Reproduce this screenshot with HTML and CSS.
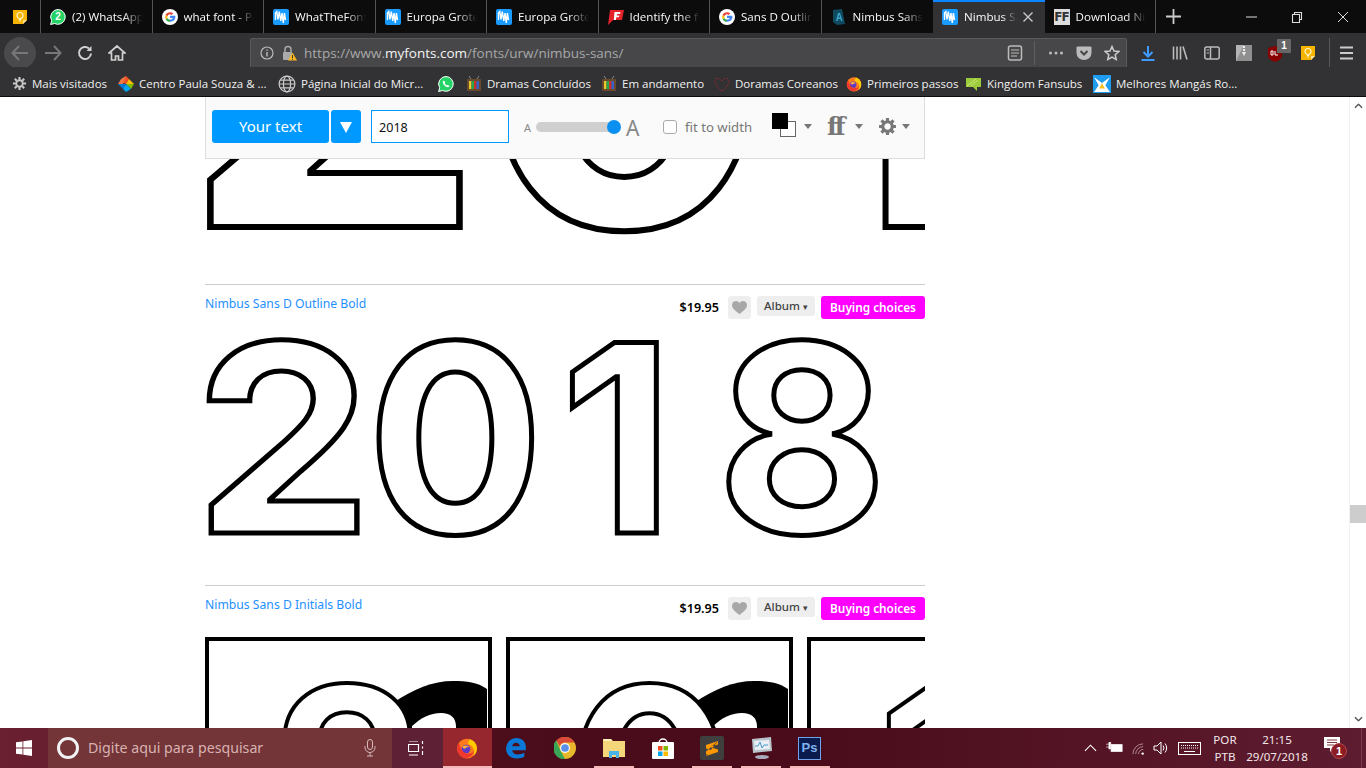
FILE: index.html
```html
<!DOCTYPE html>
<html lang="pt">
<head>
<meta charset="utf-8">
<title>Nimbus Sans</title>
<link rel="stylesheet" href="styles.css">
</head>
<body>
<svg class="defs" width="0" height="0">
  <symbol id="mf" viewBox="0 0 16 16"><rect width="16" height="16" rx="2" fill="#1a9bff"/><path d="M2.500 11V4l1.300-1.500 1.200 8 1.300-8 1.500 9.500 1.200-8 1.300 10 1.100-10 1.100 7" fill="none" stroke="#fff" stroke-width="1.400"/></symbol>
  <symbol id="goog" viewBox="0 0 16 16"><circle cx="8" cy="8" r="8" fill="#fff"/><path d="M8 6.800h5.300c.3 2-.3 6-5.300 6V10.600c1.500 0 2.400-.7 2.700-1.700H8z" fill="#4285f4"/><path d="M8 10.600v2.200c-2 0-3.600-1-4.400-2.600l1.900-1.300c.4 1 1.300 1.700 2.500 1.700z" fill="#34a853"/><path d="M3.600 10.200a5.200 5.200 0 0 1 0-4.400l1.900 1.400a2.800 2.800 0 0 0 0 1.700z" fill="#fbbc05"/><path d="M3.600 5.800C4.400 4.200 6 3.200 8 3.200c1.300 0 2.400.5 3.200 1.200L9.700 5.900C9.200 5.500 8.700 5.300 8 5.300c-1.200 0-2.100.8-2.500 1.900z" fill="#ea4335"/></symbol>
  <symbol id="wa" viewBox="0 0 16 16"><path d="M8 .5a7.400 7.400 0 0 0-6.300 11.200L.6 15.500l3.900-1A7.400 7.400 0 1 0 8 .5z" fill="#25d366" stroke="#fff" stroke-width="1"/><path d="M5.500 4.500c-1.500 1.500-.5 3.500 1 5s3.500 2.500 5 1l-1.500-1.700-1.200.6c-1-.4-1.700-1.200-2.100-2.100l.6-1.200z" fill="#fff"/></symbol>
  <symbol id="wan" viewBox="0 0 16 16"><path d="M8 .5a7.400 7.400 0 0 0-6.300 11.200L.6 15.500l3.900-1A7.400 7.400 0 1 0 8 .5z" fill="#25d366" stroke="#fff" stroke-width="1"/></symbol>
  <symbol id="keep" viewBox="0 0 16 16"><path d="M1 1h14v10l-4 4H1z" fill="#f4b400"/><path d="M11 15v-4h4z" fill="#fde293"/><circle cx="8" cy="6.500" r="3" fill="none" stroke="#fff2c4" stroke-width="1.200"/><path d="M6.800 10.500h2.400M7 12h2" stroke="#fff2c4" stroke-width="1"/></symbol>
  <symbol id="tv" viewBox="0 0 16 16"><path d="M5 3 3 0M11 3l2-3" stroke="#888" stroke-width="1"/><rect x="1" y="3" width="14" height="12" rx="1" fill="#6b4a2c"/><rect x="3" y="5" width="2.500" height="8" fill="#e8c82a"/><rect x="5.500" y="5" width="2.500" height="8" fill="#2aa44a"/><rect x="8" y="5" width="2.500" height="8" fill="#c8322a"/><rect x="10.500" y="5" width="2.500" height="8" fill="#3a5fc8"/></symbol>
  <symbol id="ff" viewBox="0 0 20 20"><circle cx="10" cy="10.500" r="9" fill="#ff7b1c"/><path d="M10 1.500a9 9 0 0 1 9 9c0 3-1 5-3 6.500 1-3 .5-6-1-8-1-1.500-3-2-4-3 0-2 1-3 2-4z" fill="#ffcb00"/><circle cx="9" cy="11" r="4" fill="#5a3cc8"/><path d="M3 6c1 4 3 9 8 9s6-3 6-6c0 5-3 10-8 10S1 14 1 10c0-2 1-3 2-4z" fill="#f0382c"/><path d="M6 8.500c2-1.500 5-1 6 1-2-.5-3 0-3.500 1C7 11 6 10 6 8.500z" fill="#ffb13a"/></symbol>
  <symbol id="uarr" viewBox="0 0 10 6"><path d="M1 5l4-4 4 4" fill="none" stroke="#555" stroke-width="1.500"/></symbol>
</svg>

<header class="tabstrip">
  <div class="tab pinned"><svg class="ico16"><use href="#keep"/></svg></div>
  <div class="tab"><span class="ico-wrap"><svg class="ico16"><use href="#wan"/></svg><span class="wa-num">2</span></span><span class="tab-label">(2) WhatsApp Web</span></div>
  <div class="tab"><svg class="ico16"><use href="#goog"/></svg><span class="tab-label">what font - Pesquisa</span></div>
  <div class="tab"><svg class="ico16"><use href="#mf"/></svg><span class="tab-label">WhatTheFont</span></div>
  <div class="tab"><svg class="ico16"><use href="#mf"/></svg><span class="tab-label">Europa Grotesk</span></div>
  <div class="tab"><svg class="ico16"><use href="#mf"/></svg><span class="tab-label">Europa Grotesk</span></div>
  <div class="tab"><svg class="ico16" viewBox="0 0 16 16"><path d="M2 1h14l-2 10H5l-5 5z" fill="#e4222a"/><path d="M6.500 3h6l-.4 2H9l-.2 1.500h2.600l-.4 1.800H8.400L7.800 11H5.800z" fill="#fff"/></svg><span class="tab-label">Identify the font</span></div>
  <div class="tab"><svg class="ico16"><use href="#goog"/></svg><span class="tab-label">Sans D Outline</span></div>
  <div class="tab"><svg class="ico16" viewBox="0 0 16 16"><path d="M2 1 11 0l3 15-8 1-4-3z" fill="#0f4a60"/><path d="M7 4 5 12h1.500l.5-2h2.500l.5 2h1.500L9 4zM7.400 8.600 8.200 5.500 9 8.600z" fill="#3ba3c7"/></svg><span class="tab-label">Nimbus Sans</span></div>
  <div class="tab active"><svg class="ico16"><use href="#mf"/></svg><span class="tab-label short">Nimbus Sans</span><svg class="tab-x" viewBox="0 0 10 10"><path d="M.5.5l9 9M9.500.5l-9 9" stroke="#c8c8c8" stroke-width="1.400"/></svg></div>
  <div class="tab"><span class="ff-ico">FF</span><span class="tab-label">Download Nimbus</span></div>
  <div class="tab-new"><svg width="15" height="15" viewBox="0 0 15 15"><path d="M7.500 0v15M0 7.500h15" stroke="#ccc" stroke-width="1.800"/></svg></div>
  <div class="win-btns">
    <svg class="win-btn" viewBox="0 0 46 12"><path d="M18 6h11" stroke="#ddd"/></svg>
    <svg class="win-btn" viewBox="0 0 46 12"><path d="M18.500 3.500h7v8h-7zM20.500 3.500V1.500h7v7h-2" fill="none" stroke="#ddd" stroke-width="1.100"/></svg>
    <svg class="win-btn" viewBox="0 0 46 12"><path d="M18 1l10 10M28 1 18 11" stroke="#ddd"/></svg>
  </div>
</header>

<nav class="navbar">
  <div class="nav-left">
    <span class="back-btn"><svg width="18" height="16" viewBox="0 0 18 16"><path d="M17 8H2M8 1 1.500 8 8 15" fill="none" stroke="#77777a" stroke-width="2"/></svg></span>
    <svg class="nav-ico" viewBox="0 0 18 16"><path d="M1 8h15M10 1l6.500 7L10 15" fill="none" stroke="#77777a" stroke-width="2"/></svg>
    <svg class="nav-ico" viewBox="0 0 18 16"><path d="M15 8.500A6 6 0 1 1 13 3.500" fill="none" stroke="#d0d0d0" stroke-width="2"/><path d="M15.500 1v5h-5z" fill="#d0d0d0"/></svg>
    <svg class="nav-ico" viewBox="0 0 18 16"><path d="M9 1 1 8h2.500v7h4v-4h3v4h4V8H17z" fill="none" stroke="#d0d0d0" stroke-width="1.700"/></svg>
  </div>
  <div class="urlbar">
    <svg class="url-ico" viewBox="0 0 14 14"><circle cx="7" cy="7" r="6" fill="none" stroke="#bbb" stroke-width="1.200"/><path d="M7 6v4.500M7 3.500v1.300" stroke="#bbb" stroke-width="1.400"/></svg>
    <svg class="lock" viewBox="0 0 16 16"><path d="M4 7V4.500a3 3 0 0 1 6 0V7" fill="none" stroke="#aaa" stroke-width="1.500"/><rect x="2" y="7" width="9" height="8" rx="1" fill="#aaa"/><path d="M11.500 7.500 16 15.500H7z" fill="#ffb81f"/><path d="M11.500 10v3M11.500 13.800v1" stroke="#333" stroke-width="1"/></svg>
    <span class="url-text">https://www.<b>myfonts.com</b>/fonts/urw/nimbus-sans/</span>
    <svg class="url-act" viewBox="0 0 16 16"><rect x="1.500" y="1" width="13" height="14" rx="2" fill="none" stroke="#bbb" stroke-width="1.500"/><path d="M4 5h8M4 8h8M4 11h6" stroke="#bbb" stroke-width="1.200"/></svg>
    <span class="url-sep"></span>
    <svg class="url-act" viewBox="0 0 16 16"><circle cx="2.500" cy="8" r="1.500" fill="#bbb"/><circle cx="8" cy="8" r="1.500" fill="#bbb"/><circle cx="13.500" cy="8" r="1.500" fill="#bbb"/></svg>
    <svg class="url-act" viewBox="0 0 16 16"><path d="M1.500 1.500h13q1 0 1 1V8a7.500 7 0 0 1-15 0V2.500q0-1 1-1z" fill="#bbb"/><path d="M4.500 6 8 9.500 11.500 6" fill="none" stroke="#47474a" stroke-width="2"/></svg>
    <svg class="url-act" viewBox="0 0 16 16"><path d="M8 1.500l2 4.500 4.800.5-3.600 3.200 1 4.800L8 12.200 3.800 14.500l1-4.800L1.200 6.500 6 6z" fill="none" stroke="#ccc" stroke-width="1.500"/></svg>
  </div>
  <div class="nav-right">
    <svg class="nav-ico" viewBox="0 0 16 16"><path d="M8 1v10M3.500 7 8 11.500 12.500 7" fill="none" stroke="#3d9bff" stroke-width="2"/><path d="M1.500 15h13" stroke="#3d9bff" stroke-width="2"/></svg>
    <svg class="nav-ico" viewBox="0 0 16 16"><path d="M1.500 1.500v13M5 1.500v13M8.500 1.500v13M11 1.500l4 13" stroke="#bbb" stroke-width="1.600"/></svg>
    <svg class="nav-ico" viewBox="0 0 16 16"><rect x=".8" y="2" width="14.400" height="12" rx="2" fill="none" stroke="#bbb" stroke-width="1.500"/><path d="M6.500 2v12" stroke="#bbb" stroke-width="1.500"/><path d="M2.500 5h2.500M2.500 8h2.500" stroke="#bbb"/></svg>
    <svg class="nav-ico" viewBox="0 0 16 16"><path d="M0 0h16v16H0z" fill="#b4b4b4"/><path d="M8 0h8v16H0z" fill="#8f8f8f"/><path d="M7 1h2v2H7zM7 4h2v2H7zM6 7h4l-2 4z" fill="#eee"/></svg>
    <span class="ublock"><svg class="ico16" viewBox="0 0 16 16"><path d="M8 0 15 2v7c0 4-4 6-7 7-3-1-7-3-7-7V2z" fill="#800"/><path d="M4 5v4h2V5zM8 5v4h3" fill="none" stroke="#fff" stroke-width="1"/></svg><span class="ub-badge">1</span></span>
    <svg class="nav-ico"><use href="#keep"/></svg>
    <span class="nav-sep"></span>
    <svg class="nav-ico burger" viewBox="0 0 16 16"><path d="M1 2.500h13M1 8h13M1 13.500h13" stroke="#ccc" stroke-width="2"/></svg>
  </div>
</nav>

<div class="bookmarks">
  <span class="bm"><svg class="ico15" viewBox="0 0 16 16"><path d="M8 1v3M8 12v3M1 8h3M12 8h3M3 3l2 2M11 11l2 2M3 13l2-2M11 5l2-2" stroke="#c8c8c8" stroke-width="2.200"/><circle cx="8" cy="8" r="3.500" fill="none" stroke="#c8c8c8" stroke-width="2"/></svg>Mais visitados</span>
  <span class="bm"><svg class="ico16" viewBox="0 0 16 16"><path d="M8 0l3 3-3 5-5-2z" fill="#f25022"/><path d="M8 0 5 8H0l3-5z" fill="#e74"/><path d="M11 3l5 5h-8z" fill="#ffb900"/><path d="M16 8l-3 5-5-5z" fill="#7fba00"/><path d="M8 8l5 5-5 3-3-3z" fill="#00a4ef"/><path d="M0 8h8l-3 5z" fill="#0078d7"/></svg>Centro Paula Souza &amp; ...</span>
  <span class="bm"><svg class="ico18" viewBox="0 0 16 16"><g fill="none" stroke="#c8c8c8" stroke-width="1.100"><circle cx="8" cy="8" r="7"/><ellipse cx="8" cy="8" rx="3.200" ry="7"/><path d="M1 8h14M2 4.500h12M2 11.500h12"/></g></svg>Página Inicial do Micr...</span>
  <span class="bm"><svg class="ico16"><use href="#wa"/></svg></span>
  <span class="bm"><svg class="ico16"><use href="#tv"/></svg>Dramas Concluídos</span>
  <span class="bm"><svg class="ico16"><use href="#tv"/></svg>Em andamento</span>
  <span class="bm"><svg class="ico16" viewBox="0 0 16 16"><path d="M8 15C2 10 .5 7 1 4.500 2 1.500 6 1.500 8 5c2-3.500 6-3.500 7-.5.500 2.500-1 5.500-7 10.500z" fill="none" stroke="#8a2a35" stroke-width="1" stroke-dasharray="2 1"/></svg>Doramas Coreanos</span>
  <span class="bm"><svg class="ico16"><use href="#ff"/></svg>Primeiros passos</span>
  <span class="bm"><svg class="ico16" viewBox="0 0 16 16"><path d="M0 2h15v9H11v4L7 11H0z" fill="#9ccc3c"/><path d="M1 10l9-7M5 10l7-6" stroke="#c8e67a"/></svg>Kingdom Fansubs</span>
  <span class="bm"><svg class="ico18" viewBox="0 0 16 16"><rect width="16" height="16" fill="#1e9cf0"/><path d="M1 2l7 5 7-5-4 7 4 6H1l4-6z" fill="#fff"/><path d="M8 7l2.500 5h-5z" fill="#f0c020"/></svg>Melhores Mangás Ro...</span>
</div>

<main class="viewport">
  <div class="page-col">
    <div class="tester">
      <span class="btn-text">Your text</span>
      <span class="btn-drop"><svg width="12" height="12" viewBox="0 0 12 12"><path d="M0 1h12L6 12z" fill="#fff"/></svg></span>
      <span class="tester-input">2018</span>
      <span class="a-small">A</span>
      <span class="slider"><span class="slider-thumb"></span></span>
      <span class="a-big">A</span>
      <span class="check"></span>
      <span class="fit">fit to width</span>
      <span class="swatch"><span class="sw-white"></span><span class="sw-black"></span></span>
      <span class="caret c1"></span>
      <span class="ff-lig">ff</span>
      <span class="caret c2"></span>
      <svg class="gear" viewBox="0 0 18 18"><path d="M9 1v4M9 13v4M1 9h4M13 9h4M3.300 3.300l2.800 2.800M11.900 11.900l2.800 2.800M3.300 14.700l2.800-2.800M11.900 6.100l2.800-2.800" stroke="#777" stroke-width="3"/><circle cx="9" cy="9" r="4.500" fill="none" stroke="#777" stroke-width="3"/></svg>
      <span class="caret c3"></span>
    </div>
    <div class="specimens">
      <section class="specimen">
        <div class="spec-head"></div>
        <div class="glyphs huge"><span class="dg two">2</span><span class="dg">0</span><span class="dg one">1</span><span class="dg">8</span></div>
      </section>
      <section class="specimen">
        <div class="spec-head">
          <a class="spec-name">Nimbus Sans D Outline Bold</a>
          <span class="price">$19.95</span>
          <span class="heart"><svg width="15" height="13" viewBox="0 0 15 13"><path d="M7.500 13C2 9 0 6.500 0 4 0 1.500 2 0 4 0c1.500 0 2.700.8 3.500 2C8.300.8 9.500 0 11 0c2 0 4 1.500 4 4 0 2.500-2 5-7.500 9z" fill="#a8a8a8"/></svg></span>
          <span class="album">Album <i>▾</i></span>
          <span class="buy">Buying choices</span>
        </div>
        <div class="glyphs"><span class="dg two">2</span><span class="dg">0</span><span class="dg one">1</span><span class="dg">8</span></div>
      </section>
      <section class="specimen">
        <div class="spec-head">
          <a class="spec-name">Nimbus Sans D Initials Bold</a>
          <span class="price">$19.95</span>
          <span class="heart"><svg width="15" height="13" viewBox="0 0 15 13"><path d="M7.500 13C2 9 0 6.500 0 4 0 1.500 2 0 4 0c1.500 0 2.700.8 3.500 2C8.300.8 9.500 0 11 0c2 0 4 1.500 4 4 0 2.500-2 5-7.500 9z" fill="#a8a8a8"/></svg></span>
          <span class="album">Album <i>▾</i></span>
          <span class="buy">Buying choices</span>
        </div>
        <div class="initials">
          <div class="initial"><svg class="swoosh" viewBox="0 0 95 60"><path d="M0 60V22C20 8 40 0 60 0c14 0 24 1 34 8v52z" fill="#000"/><path d="M19 60V45C28 37 37 32 48 32c10 0 15 5 15 14v14z" fill="#fff"/></svg><span class="init-digit">2</span></div>
          <div class="initial"><svg class="swoosh" viewBox="0 0 95 60"><path d="M0 60V22C20 8 40 0 60 0c14 0 24 1 34 8v52z" fill="#000"/><path d="M19 60V45C28 37 37 32 48 32c10 0 15 5 15 14v14z" fill="#fff"/></svg><span class="init-digit">0</span></div>
          <div class="initial"><span class="init-digit init-one">1</span></div>
        </div>
      </section>
    </div>
  </div>
  <aside class="scrollbar">
    <svg class="sb-arrow" viewBox="0 0 10 6"><use href="#uarr"/></svg>
    <span class="sb-thumb"></span>
    <svg class="sb-arrow flip" viewBox="0 0 10 6"><use href="#uarr"/></svg>
  </aside>
</main>

<footer class="taskbar">
  <span class="tb-start"><svg width="16" height="16" viewBox="0 0 16 16"><path d="M0 2.300 6.500 1.400v6.200H0zM7.300 1.300 16 0v7.600H7.300zM0 8.400h6.500v6.200L0 13.700zM7.300 8.400H16V16l-8.700-1.300z" fill="#fff"/></svg></span>
  <span class="tb-search"><span class="cortana"></span><span class="tb-placeholder">Digite aqui para pesquisar</span><svg class="mic" viewBox="0 0 12 18"><rect x="3.500" y=".5" width="5" height="10" rx="2.500" fill="none" stroke="#d8b8b8"/><path d="M1 7v1.500a5 5 0 0 0 10 0V7M6 13.500V17M3 17h6" fill="none" stroke="#d8b8b8"/></svg></span>
  <span class="tb-view"><svg width="16" height="15" viewBox="0 0 16 15"><path d="M1 0h9M1 14h9M.5 3.500h10v7H.5zM14.500 0v3M14.500 5.500v2M14.500 10v4" fill="none" stroke="#fff" stroke-width="1.200"/></svg></span>
  <span class="tb-app running active"><svg class="ico22"><use href="#ff"/></svg></span>
  <span class="tb-app"><svg class="ico22" viewBox="0 0 20 20"><path d="M1 11C1 5 5 1 10.500 1c5 0 8.500 3.500 8.500 8.500V12H6.500c.3 2.500 2.500 4 5 4 2.500 0 4.500-.8 6-1.800V18c-1.800 1-4 1.500-6.500 1.500C5 19.500 1 16 1 11zm5.500-2.500h7C13.300 6.500 12 5.200 10 5.200c-1.800 0-3.200 1.300-3.500 3.300z" fill="#0b78d7"/></svg></span>
  <span class="tb-app"><svg class="ico22" viewBox="0 0 20 20"><circle cx="10" cy="10" r="10" fill="#e8b82c"/><path d="M10 0a10 10 0 0 1 8.700 5H10a5 5 0 0 0-4.700 3.300L2 3.200A10 10 0 0 1 10 0z" fill="#d94a38"/><path d="M2 3.200l3.500 8.500L10 20A10 10 0 0 1 2 3.200z" fill="#3aa757"/><circle cx="10" cy="10" r="4.500" fill="#fff"/><circle cx="10" cy="10" r="3.500" fill="#5a90e8"/></svg></span>
  <span class="tb-app running"><svg class="ico22" viewBox="0 0 22 20"><path d="M0 1h8l2 2h12v16H0z" fill="#f5d67a"/><path d="M1 1h7l1 2H1z" fill="#fff2c0"/><path d="M6 13h10v7h-3v-3h-4v3H6z" fill="#49b2e8"/></svg></span>
  <span class="tb-app"><svg class="ico24" viewBox="0 0 24 24"><path d="M8 7a4 4 0 0 1 8 0" fill="none" stroke="#fff" stroke-width="1.500"/><rect x="1" y="6" width="22" height="17" rx="1" fill="#fff"/><rect x="7" y="10" width="4.500" height="4.500" fill="#f25022"/><rect x="12.500" y="10" width="4.500" height="4.500" fill="#7fba00"/><rect x="7" y="15.500" width="4.500" height="4.500" fill="#00a4ef"/><rect x="12.500" y="15.500" width="4.500" height="4.500" fill="#ffb900"/></svg></span>
  <span class="tb-app running"><svg class="ico24" viewBox="0 0 24 24"><rect width="24" height="24" rx="2" fill="#3f3f3f"/><path d="M18 5 6 9v3.500l8 2.500-8 3.500v-3M18 5v3.500L10 11l8 2.500v2.500L6 20" fill="#ff9800"/></svg></span>
  <span class="tb-app running"><svg class="ico24" viewBox="0 0 24 24"><path d="M3 3l19-2 1 14-19 2z" fill="#b9c4cc"/><path d="M5 5l15-1 1 9-15 1z" fill="#e8eef2"/><path d="M6 10l3 0 2-4 2 6 2-3h4" fill="none" stroke="#4a9ad0"/><ellipse cx="13" cy="21" rx="7" ry="2" fill="#aab"/></svg></span>
  <span class="tb-app running"><span class="ps">Ps</span></span>
  <span class="tray">
    <svg class="chev" viewBox="0 0 14 8"><path d="M1 7l6-6 6 6" fill="none" stroke="#fff" stroke-width="1.200"/></svg>
    <svg class="batt" viewBox="0 0 18 12"><path d="M0 2h3M0 5h3M3 0v7h2V0z" fill="#fff" stroke="#fff" stroke-width=".6"/><rect x="5.500" y="2.500" width="11.500" height="7" fill="#fff" stroke="#fff"/></svg>
    <svg class="wifi" viewBox="0 0 14 14"><path d="M1 13a11 11 0 0 1 11-11M4 13a8 8 0 0 1 8-8M7 13a5 5 0 0 1 5-5" fill="none" stroke="#b58f96" stroke-width="1"/><circle cx="11.500" cy="12.500" r="1.300" fill="#fff"/></svg>
    <svg class="spk" viewBox="0 0 16 14"><path d="M1 5h3l4-4v12L4 9H1z" fill="none" stroke="#fff"/><path d="M10 4.500a4 4 0 0 1 0 5M12 2.500a7 7 0 0 1 0 9" fill="none" stroke="#fff"/></svg>
    <svg class="kbd" viewBox="0 0 23 13"><rect x=".5" y=".5" width="22" height="12" fill="none" stroke="#fff"/><path d="M3 3.500h17M3 6h17" stroke="#fff" stroke-dasharray="1 1"/><path d="M6 9.500h11" stroke="#fff"/></svg>
    <span class="lang"><span>POR</span><span>PTB</span></span>
    <span class="clock"><span>21:15</span><span>29/07/2018</span></span>
    <span class="notif"><svg width="17" height="16" viewBox="0 0 17 16"><path d="M0 0h16v11H9l-3 4v-4H0z" fill="#fff"/><path d="M3 3h10M3 5.500h10M3 8h7" stroke="#7a3a40"/></svg><span class="notif-badge">1</span></span>
    <span class="tb-edge"></span>
  </span>
</footer>
</body>
</html>
```
FILE: styles.css
```css
* { box-sizing: border-box; }
html, body { margin: 0; padding: 0; }
body {
  width: 1366px; height: 768px; overflow: hidden;
  display: flex; flex-direction: column;
  font-family: "Open Sans", "Noto Sans", sans-serif;
  background: #fff;
}
.defs { position: absolute; }
.ico15 { width: 15px; height: 15px; flex: none; }
.ico16 { width: 16px; height: 16px; flex: none; }
.ico18 { width: 18px; height: 18px; flex: none; }
.ico22 { width: 22px; height: 22px; }
.ico24 { width: 24px; height: 24px; }

/* Tab strip */
.tabstrip { height: 33px; background: #0c0c0d; display: flex; flex: none; }
.tab {
  width: 111.5px; flex: none; height: 33px; display: flex; align-items: center; gap: 6px;
  padding: 0 9px; border-right: 1px solid #555; color: #f9f9fa; font-size: 11.6px; overflow: hidden;
}
.tab.pinned { width: 41px; padding-left: 12px; }
.tab.active { background: #323234; border-top: 2px solid #0a84ff; border-right: 0; padding-bottom: 2px; }
.tab:nth-child(9), .tab:nth-child(10) { border-right-color: #0c0c0d; }
.tab-label {
  flex: 1; min-width: 0; white-space: nowrap; overflow: hidden;
  -webkit-mask-image: linear-gradient(90deg, #000 72%, transparent 100%);
  mask-image: linear-gradient(90deg, #000 72%, transparent 100%);
}
.tab-x { width: 10px; height: 10px; flex: none; margin-right: 3px; }
.ico-wrap { position: relative; width: 16px; height: 16px; flex: none; }
.wa-num { position: absolute; left: 0; right: 0; top: 1px; text-align: center; font: bold 10px/14px "Liberation Sans", sans-serif; color: #fff; }
.ff-ico { width: 16px; height: 16px; flex: none; background: #ddd; color: #333; font: bold 12px/16px "DejaVu Sans", sans-serif; text-align: center; letter-spacing: -1px; }
.tab-new { width: 34px; display: flex; align-items: center; justify-content: center; }
.win-btns { margin-left: auto; display: flex; align-items: center; }
.win-btn { width: 46px; height: 12px; }

/* Nav bar */
.navbar { height: 34px; background: #323234; display: flex; align-items: center; flex: none; padding-top: 6px; }
.nav-left { width: 250px; display: flex; align-items: center; padding-left: 4px; gap: 14px; }
.back-btn { width: 32px; height: 32px; border-radius: 50%; background: #4a4a4d; display: flex; align-items: center; justify-content: center; margin-right: -6px; flex: none; }
.nav-ico { width: 18px; height: 16px; flex: none; }
.urlbar {
  width: 877px; height: 30px; background: #474749; border: 1px solid #5a5a5c; border-radius: 2px;
  display: flex; align-items: center; padding: 0 6px 0 9px; color: #a8a8a8; font-size: 14px; flex: none;
}
.url-ico { width: 14px; height: 14px; flex: none; }
.lock { width: 16px; height: 16px; flex: none; margin-left: 7px; }
.url-text { margin-left: 7px; flex: 1; white-space: nowrap; font-size: 13.5px; }
.url-text b { color: #f4f4f4; font-weight: 400; }
.url-act { width: 16px; height: 16px; flex: none; margin-left: 12px; }
.url-sep { width: 1px; height: 24px; background: #5f5f61; margin-left: 11px; margin-right: 1px; flex: none; }
.nav-right { flex: 1; display: flex; align-items: center; justify-content: flex-start; padding-left: 12px; gap: 14px; }
.nav-sep { width: 1px; height: 30px; background: #58585a; margin: 0 -1px 0 -2px; flex: none; }
.burger { margin-left: -5px; }
.ublock { position: relative; width: 18px; height: 16px; flex: none; }
.ub-badge { position: absolute; left: 10px; top: -6px; width: 14px; height: 14px; background: #666; color: #fff; font: bold 10px/14px "Liberation Sans", sans-serif; text-align: center; }

/* Bookmarks */
.bookmarks {
  height: 30px; flex: none; background: #323234; border-bottom: 1px solid #0c0c0d; color: #f0f0f0;
  display: grid; grid-template-columns: 106px 160px 160px 28px 135px 113px 132px 120px 127px 240px;
  align-items: center; padding-left: 12px; padding-top: 4px; font-size: 11.5px;
}
.bm { display: flex; align-items: center; gap: 5px; white-space: nowrap; }

/* Page */
.viewport { flex: 1; min-height: 0; display: flex; overflow: hidden; background: #fff; }
.page-col { width: 720px; margin-left: 205px; position: relative; height: 100%; }
.scrollbar {
  margin-left: auto; width: 17px; display: flex; flex-direction: column; align-items: center; justify-content: space-between;
  background: #fff; border-left: 1px solid #f1f1f1; padding: 6px 0; position: relative;
}
.sb-arrow { width: 9px; height: 6px; }
.sb-arrow.flip { transform: rotate(180deg); }
.sb-thumb { position: absolute; top: 408px; left: 0; width: 17px; height: 18px; background: #cdcdcd; }

.tester {
  position: absolute; left: 0; top: 0; width: 720px; height: 62px; z-index: 5;
  display: flex; align-items: center; padding: 0 0 2px 6px;
  background: #fafafa; border: 1px solid #ddd; border-top: 0; font-family: "Noto Sans", sans-serif;
}
.tester > * { flex: none; }
.btn-text { width: 117px; height: 33px; background: #0099ff; color: #fff; border-radius: 3px; font-size: 15px; line-height: 33px; text-align: center; }
.btn-drop { margin-left: 2px; width: 30px; height: 33px; background: #0099ff; border-radius: 3px; display: flex; align-items: center; justify-content: center; }
.tester-input { margin-left: 10px; width: 138px; height: 33px; background: #fff; border: 1px solid #0099ff; padding-left: 7px; font-size: 12.6px; line-height: 33px; color: #111; }
.a-small { margin-left: 15px; width: 12px; font-size: 11px; line-height: 14px; color: #888; padding-top: 2px; }
.slider { position: relative; width: 84px; height: 10px; border-radius: 5px; background: #cfcfcf; margin-top: 1px; }
.slider-thumb { position: absolute; right: -1px; top: -2px; width: 14px; height: 14px; border-radius: 50%; background: #0a90f0; }
.a-big { margin-left: 6px; width: 14px; font-size: 21px; line-height: 28px; color: #888; margin-top: 2px; }
.check { margin-left: 23px; width: 14px; height: 14px; background: #fff; border: 1px solid #aaa; border-radius: 3px; }
.fit { margin-left: 8px; width: 68px; font-size: 13.2px; line-height: 18px; color: #777; white-space: nowrap; }
.swatch { position: relative; margin-left: 19px; width: 25px; height: 25px; margin-top: -2px; }
.sw-white { position: absolute; right: 1px; bottom: 1px; width: 16px; height: 16px; background: #fff; border: 1px solid #666; }
.sw-black { position: absolute; left: 0; top: 0; width: 16px; height: 16px; background: #000; }
.caret { width: 0; height: 0; border-left: 4px solid transparent; border-right: 4px solid transparent; border-top: 5px solid #777; }
.c1 { margin-left: 7px; } .c2 { margin-left: 6px; } .c3 { margin-left: 5px; }
.ff-lig { margin-left: 15px; width: 22px; font: bold 25px/34px "DejaVu Serif", "Liberation Serif", serif; color: #777; letter-spacing: -3px; }
.gear { margin-left: 15px; width: 19px; height: 19px; }

.specimens { margin-top: -114px; }
.specimen { height: 301px; border-top: 1px solid #ccc; overflow: hidden; }
.spec-head { height: 38px; display: flex; align-items: flex-start; padding-top: 11px; }
.spec-name { color: #1e90ff; font: 12.2px/16px "Noto Sans", sans-serif; margin-right: auto; }
.price { font: 600 12.6px/23px "Noto Sans", sans-serif; color: #000; margin-right: 9px; }
.heart { width: 23px; height: 23px; background: #eee; border-radius: 3px; display: flex; align-items: center; justify-content: center; margin-right: 6px; }
.album { height: 20px; width: 58px; text-align: center; background: #eee; border-radius: 3px; color: #444; font: 500 11.5px/20px "Noto Sans", sans-serif; margin-right: 6px; }
.album i { font-style: normal; font-size: 9px; }
.buy { height: 23px; width: 104px; text-align: center; background: #f0f; border-radius: 3px; color: #fff; font: 600 11.8px/23px "Noto Sans", sans-serif; }

.glyphs {
  display: flex; margin-left: -12px;
  font: 700 262px/230px "Inter", "Liberation Sans", sans-serif;
  white-space: nowrap; color: #fff; -webkit-text-stroke: 5px #000;
}
.dg { flex: none; width: 174px; text-align: center; }
.dg.one { padding-right: .084em; }
.dg.two { padding-left: 6px; transform: scaleX(1.08); }
.huge { font-size: 440px; line-height: 300px; -webkit-text-stroke-width: 6px; margin-top: -105px; margin-left: -14px; }
.huge .dg { width: 285px; }
.huge .dg.two { padding-left: 0; transform: scaleX(1.1); }
.initials { display: flex; gap: 14px; margin-top: 13px; white-space: nowrap; }
.initial { position: relative; flex: none; width: 287px; height: 287px; border: 4px solid #000; overflow: hidden; text-align: center; }
.swoosh { position: absolute; right: 0; top: 40px; width: 95px; height: 60px; }
.init-digit { position: relative; display: block; font: 700 245px/268px "Inter", "Liberation Sans", sans-serif; color: #fff; -webkit-text-stroke: 4px #000; }
.init-one { padding-right: 40px; }

/* Taskbar */
.taskbar {
  height: 40px; flex: none; display: flex; align-items: stretch;
  background: linear-gradient(90deg, #6a2030 0%, #4a0c1a 40%, #4a0c1a 60%, #5e1c30 100%);
  color: #f2e6e8;
}
.tb-start { width: 48px; display: flex; align-items: center; justify-content: center; }
.tb-search { width: 344px; background: #733538; display: flex; align-items: center; padding-left: 9px; }
.cortana { width: 22px; height: 22px; border: 3px solid #f2f2f2; border-radius: 50%; flex: none; }
.tb-placeholder { margin-left: 9px; font: 14.2px/20px "Noto Sans", sans-serif; color: #d8b2b2; flex: 1; }
.mic { width: 12px; height: 18px; margin-right: 16px; }
.tb-view { width: 51px; background: #5e2034; display: flex; align-items: center; justify-content: center; padding-right: 4px; }
.tb-app { width: 49px; display: flex; align-items: center; justify-content: center; position: relative; padding-right: 2px; }
.tb-app.active { background: #96272f; }
.tb-app.running::after { content: ""; position: absolute; bottom: 0; left: 4px; right: 5px; height: 2px; background: #f4b8b8; }
.tb-app.active::after { left: 0; right: 0; }
.ps { width: 23px; height: 23px; background: #0a1c4e; border: 1.5px solid #6fa4ea; color: #7fb2f0; font: bold 13px/20px "Liberation Sans", sans-serif; text-align: center; }
.tray { margin-left: auto; display: flex; align-items: center; width: 284px; padding-left: 2px; font: 11.6px/17px "Noto Sans", sans-serif; }
.tray > * { flex: none; }
.chev { width: 13px; height: 8px; }
.batt { margin-left: 9px; width: 17px; height: 12px; }
.wifi { margin-left: 9px; width: 13px; height: 13px; }
.spk { margin-left: 8px; width: 16px; height: 14px; }
.kbd { margin-left: 9px; width: 23px; height: 13px; }
.lang { margin-left: 11px; width: 26px; display: flex; flex-direction: column; align-items: center; }
.clock { margin-left: 6px; width: 66px; display: flex; flex-direction: column; align-items: center; white-space: nowrap; }
.notif { position: relative; margin-left: 14px; height: 16px; margin-top: -6px; }
.notif-badge { position: absolute; left: 7px; top: 6px; width: 16px; height: 16px; border-radius: 50%; background: #8c1c24; border: 1px solid #b04a50; color: #fff; font: bold 11px/14px "Liberation Sans", sans-serif; text-align: center; }
.tb-edge { margin-left: auto; margin-right: 4px; height: 40px; width: 1px; background: #7a3a4a; }
```
